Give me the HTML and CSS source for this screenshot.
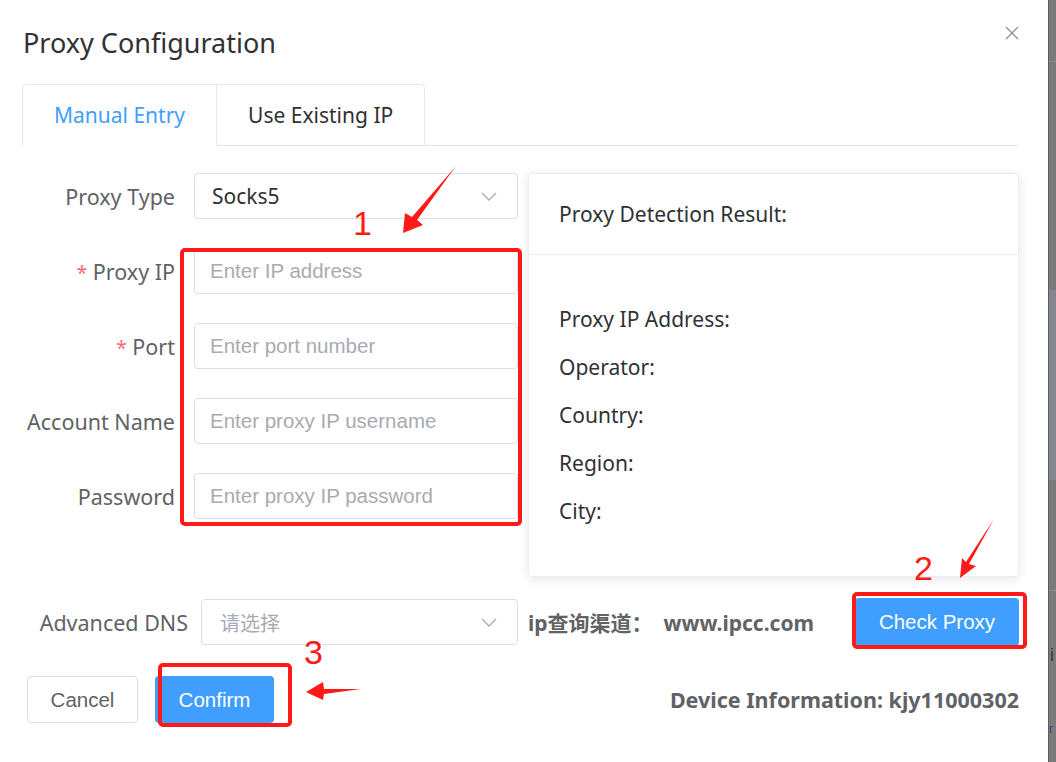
FILE: index.html
```html
<!DOCTYPE html>
<html lang="en">
<head>
    <meta charset="UTF-8">
    <meta name="viewport" content="width=device-width, initial-scale=1.0">
    <title>Proxy Configuration</title>
    <link rel="stylesheet" href="styles.css">
</head>
<body>
    <div class="screen">
        <div class="dialog">
            <div class="dialog-header">
                <span class="dialog-title">Proxy Configuration</span>
                <svg class="close-btn" width="14" height="14" viewBox="0 0 14 14">
                    <path d="M1 1 L13 13 M13 1 L1 13" stroke="#909399" stroke-width="1.4" fill="none"/>
                </svg>
            </div>

            <div class="tabs">
                <div class="tab-group">
                    <div class="tab active">Manual Entry</div>
                    <div class="tab">Use Existing IP</div>
                </div>
                <div class="tab-rest"></div>
            </div>

            <div class="main-row">
                <div class="form-col">
                    <div class="form-item">
                        <label class="form-label">Proxy Type</label>
                        <div class="select">
                            <span class="select-value">Socks5</span>
                            <svg class="chevron" width="16" height="9" viewBox="0 0 16 9">
                                <polyline points="1,1 8,8 15,1" stroke="#a8abb2" stroke-width="1.3" fill="none"/>
                            </svg>
                        </div>
                    </div>
                    <div class="form-item">
                        <label class="form-label"><span class="required">*</span> Proxy IP</label>
                        <input class="input" type="text" placeholder="Enter IP address">
                    </div>
                    <div class="form-item">
                        <label class="form-label"><span class="required">*</span> Port</label>
                        <input class="input" type="text" placeholder="Enter port number">
                    </div>
                    <div class="form-item">
                        <label class="form-label">Account Name</label>
                        <input class="input" type="text" placeholder="Enter proxy IP username">
                    </div>
                    <div class="form-item">
                        <label class="form-label">Password</label>
                        <input class="input" type="text" placeholder="Enter proxy IP password">
                    </div>
                </div>

                <div class="result-card">
                    <div class="card-header">Proxy Detection Result:</div>
                    <div class="card-body">
                        <div class="result-item">Proxy IP Address:</div>
                        <div class="result-item">Operator:</div>
                        <div class="result-item">Country:</div>
                        <div class="result-item">Region:</div>
                        <div class="result-item">City:</div>
                    </div>
                </div>
            </div>

            <div class="dns-row">
                <label class="dns-label">Advanced DNS</label>
                <div class="select dns-select">
                    <span class="select-placeholder">请选择</span>
                    <svg class="chevron" width="16" height="9" viewBox="0 0 16 9">
                        <polyline points="1,1 8,8 15,1" stroke="#a8abb2" stroke-width="1.3" fill="none"/>
                    </svg>
                </div>
                <span class="ip-source">ip查询渠道：&nbsp; www.ipcc.com</span>
                <button class="check-btn">Check Proxy</button>
            </div>

            <div class="footer-row">
                <button class="btn-cancel">Cancel</button>
                <button class="btn-confirm">Confirm</button>
                <span class="device-info">Device Information: kjy11000302</span>
            </div>
        </div>

        <div class="backdrop">
            <div class="bd-top"></div>
            <div class="bd-block"></div>
            <div class="bd-line bd-line-1"></div>
            <div class="bd-text">i</div>
            <div class="bd-link">r</div>
        </div>

        <!-- screenshot markup: red boxes, arrows and step numbers -->
        <svg class="annotations" width="1056" height="762" viewBox="0 0 1056 762">
            <g fill="none" stroke="#ff1a1a" stroke-width="4">
                <rect x="182" y="250" width="338" height="274" rx="3"/>
                <rect x="854" y="594" width="171" height="53" rx="3"/>
                <rect x="160" y="665" width="130" height="60" rx="3"/>
            </g>
            <g fill="#ff1a1a">
                <polygon points="456,166 417,220 423,225 403,233 405,213 412,217"/>
                <polygon points="994,519 969,564 976,566 960,578 962,558 966,562"/>
                <polygon points="361,689 324,689 323,682 306,692 323,700 324,694"/>
            </g>
            <g class="step-num" fill="#ff1a1a">
                <text x="353" y="235">1</text>
                <text x="914" y="580">2</text>
                <text x="304" y="664">3</text>
            </g>
        </svg>
    </div>
</body>
</html>
```

FILE: styles.css
```css
* {
    box-sizing: border-box;
}

body {
    margin: 0;
    background-color: #7b7b7b;
    font-family: "Noto Sans", "Noto Sans CJK SC", sans-serif;
}

.screen {
    position: relative;
    display: flex;
    width: 1056px;
    height: 762px;
    overflow: hidden;
}

.dialog {
    width: 1048px;
    height: 762px;
    background: #fff;
    padding: 0 29px 0 22px;
}

.dialog-header {
    display: flex;
    justify-content: space-between;
    align-items: flex-start;
    height: 84px;
    padding-top: 26px;
}

.dialog-title {
    font-size: 27px;
    line-height: 34px;
    color: #303133;
    margin-left: 1px;
}

.close-btn {
    display: block;
}

.tabs {
    display: flex;
}

.tab-group {
    display: flex;
    border: 1px solid #e4e7ed;
    border-bottom: none;
    border-radius: 5px 5px 0 0;
}

.tab {
    height: 61px;
    padding: 0 31px;
    font-size: 21px;
    line-height: 60px;
    color: #303133;
    border-bottom: 1px solid #e4e7ed;
}

.tab + .tab {
    border-left: 1px solid #e4e7ed;
}

.tab.active {
    color: #409eff;
    border-bottom-color: #fff;
}

.tab-rest {
    flex: 1;
    border-bottom: 1px solid #e4e7ed;
}

.main-row {
    display: flex;
    margin-top: 27px;
}

.form-col {
    width: 496px;
}

.form-item {
    display: flex;
    align-items: center;
    height: 46px;
    margin-bottom: 29px;
}

.form-item:last-child {
    margin-bottom: 0;
}

.form-label {
    width: 172px;
    padding-right: 19px;
    text-align: right;
    font-size: 21.5px;
    color: #606266;
    white-space: nowrap;
}

.required {
    color: #f56c6c;
    font-size: 19px;
}

.input {
    width: 324px;
    height: 46px;
    border: 1px solid #dcdfe6;
    border-radius: 4px;
    padding: 0 15px;
    font-family: "Liberation Sans", Arial, sans-serif;
    font-size: 20.5px;
    color: #606266;
    outline: none;
}

.input::placeholder {
    color: #a8abb2;
}

.select {
    display: flex;
    align-items: center;
    justify-content: space-between;
    width: 324px;
    height: 46px;
    border: 1px solid #dcdfe6;
    border-radius: 4px;
    padding: 0 20px 0 17px;
}

.select-value {
    font-size: 21px;
    color: #303133;
}

.select-placeholder {
    font-size: 20px;
    color: #a8abb2;
}

.chevron {
    display: block;
}

.result-card {
    flex: 1;
    height: 404px;
    margin-left: 10px;
    border: 1px solid #ebeef5;
    border-radius: 4px;
    box-shadow: 0 2px 12px rgba(0, 0, 0, 0.1);
    color: #303133;
    font-size: 21px;
}

.card-header {
    display: flex;
    align-items: center;
    height: 81px;
    padding: 0 30px;
    border-bottom: 1px solid #ebeef5;
}

.card-body {
    padding: 40px 30px 0;
}

.result-item {
    line-height: 48px;
}

.dns-row {
    display: flex;
    align-items: center;
    height: 48px;
    margin-top: 21px;
}

.dns-label {
    width: 179px;
    padding-right: 13px;
    text-align: right;
    font-size: 21.5px;
    color: #606266;
    white-space: nowrap;
}

.dns-select {
    width: 317px;
    padding-left: 18px;
}

.ip-source {
    margin-left: 10px;
    font-size: 21px;
    font-weight: bold;
    color: #606266;
    white-space: nowrap;
}

.check-btn {
    margin-left: auto;
    width: 164px;
    height: 48px;
    border: none;
    border-radius: 4px;
    background-color: #409eff;
    color: #fff;
    font-family: "Liberation Sans", Arial, sans-serif;
    font-size: 20.5px;
}

.footer-row {
    display: flex;
    align-items: center;
    margin-top: 30px;
    padding-left: 5px;
}

.btn-cancel {
    width: 111px;
    height: 47px;
    border: 1px solid #dcdfe6;
    border-radius: 4px;
    background: #fff;
    color: #606266;
    font-family: "Liberation Sans", Arial, sans-serif;
    font-size: 20.5px;
}

.btn-confirm {
    margin-left: 17px;
    width: 119px;
    height: 47px;
    border: none;
    border-radius: 4px;
    background-color: #409eff;
    color: #fff;
    font-family: "Liberation Sans", Arial, sans-serif;
    font-size: 20.5px;
}

.device-info {
    margin-left: auto;
    font-size: 21.5px;
    font-weight: bold;
    color: #606266;
    white-space: nowrap;
}

.backdrop {
    flex: 1;
    position: relative;
    background-color: #7b7b7b;
    border-left: 1px solid #5e5e5e;
    overflow: hidden;
}

.bd-top {
    height: 62px;
    border-bottom: 1px solid #8a8a8a;
}

.bd-block {
    margin-top: 228px;
    height: 190px;
    background-color: #83868b;
}

.bd-line {
    height: 1px;
    background-color: #8c8c8c;
}

.bd-line-1 {
    margin-top: 110px;
}

.bd-text {
    margin-top: 54px;
    margin-left: 1px;
    font-family: "Liberation Sans", Arial, sans-serif;
    font-size: 18px;
    color: #3a3a3a;
}

.bd-link {
    margin-top: 56px;
    font-family: "Liberation Sans", Arial, sans-serif;
    font-size: 12px;
    color: #1f4d85;
}

.annotations {
    position: absolute;
    top: 0;
    left: 0;
    pointer-events: none;
}

.step-num {
    font-family: "Liberation Sans", Arial, sans-serif;
    font-size: 34px;
}
```
